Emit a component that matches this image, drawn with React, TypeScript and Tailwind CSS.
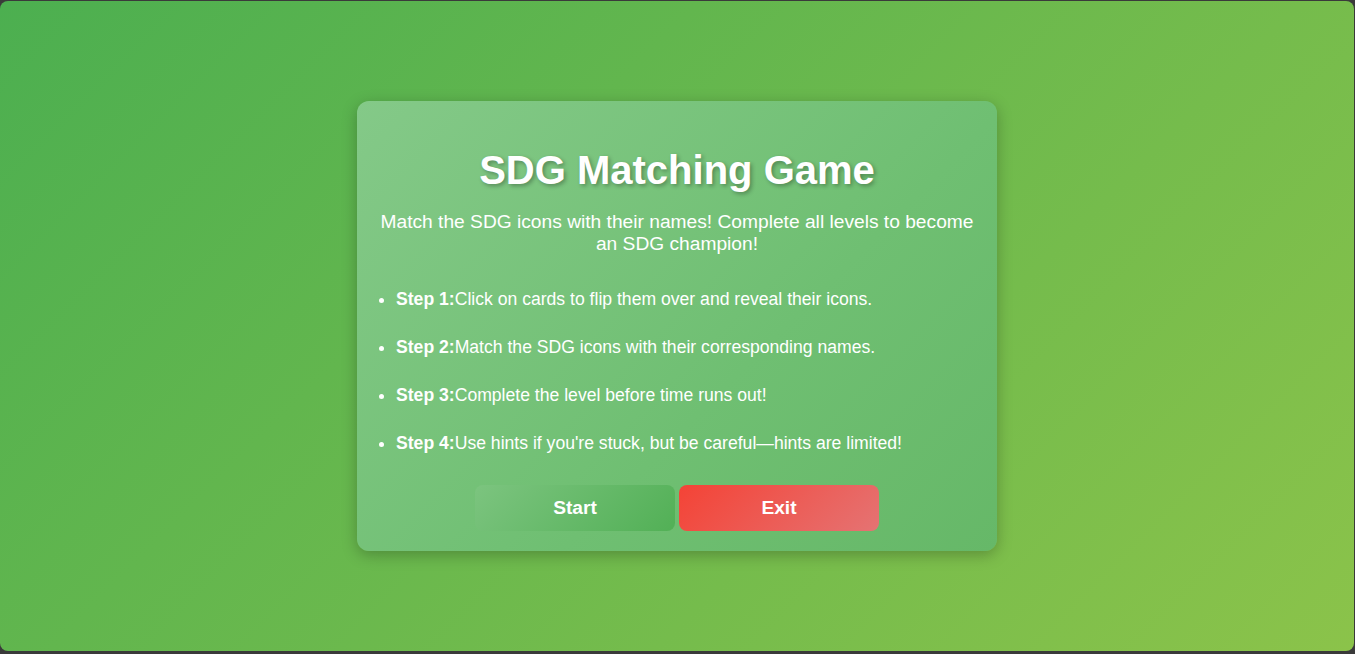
import React from "react";

export default function App() {
  const steps = [
    ["Step 1:", "Click on cards to flip them over and reveal their icons."],
    ["Step 2:", "Match the SDG icons with their corresponding names."],
    ["Step 3:", "Complete the level before time runs out!"],
    ["Step 4:", "Use hints if you're stuck, but be careful—hints are limited!"],
  ];
  return (
    <div className="w-[1355px] h-[654px] bg-[#3a3a3a] pt-px pb-[3px] pr-px" style={{ fontFamily: '"Liberation Sans", Arial, sans-serif' }}>
      <div className="w-full h-full rounded-lg bg-[linear-gradient(135deg,#4caf50,#8bc34a)] flex justify-center">
        <div className="mt-[100px] w-[640px] h-[450px] self-start rounded-xl bg-[linear-gradient(135deg,#84c988,#6fbf72_60%,#66b868)] shadow-[0_4px_15px_rgba(0,0,0,0.25)] p-5 text-white">
          <h1 className="mt-[26px] text-center text-[40px] leading-[46px] font-bold [text-shadow:2px_2px_4px_rgba(0,0,0,0.3)]">
            SDG Matching Game
          </h1>
          <p className="mt-[18px] text-center text-[19.2px] leading-[22px]">
            Match the SDG icons with their names! Complete all levels to become an SDG champion!
          </p>
          <ul className="mt-[33px] pl-[19px] list-disc flex flex-col gap-[26px] text-[17.6px] leading-[22px]">
            {steps.map(([a, b]) => (
              <li key={a}>
                <b>{a}</b>
                {b}
              </li>
            ))}
          </ul>
          <div className="mt-[31px] flex justify-center gap-1">
            <button className="w-[200px] h-[46px] rounded-lg bg-[linear-gradient(135deg,#7cc47f,#52b056)] text-white font-bold text-[19.2px]">
              Start
            </button>
            <button className="w-[200px] h-[46px] rounded-lg bg-[linear-gradient(135deg,#f44336,#e57373)] text-white font-bold text-[19.2px]">
              Exit
            </button>
          </div>
        </div>
      </div>
    </div>
  );
}
